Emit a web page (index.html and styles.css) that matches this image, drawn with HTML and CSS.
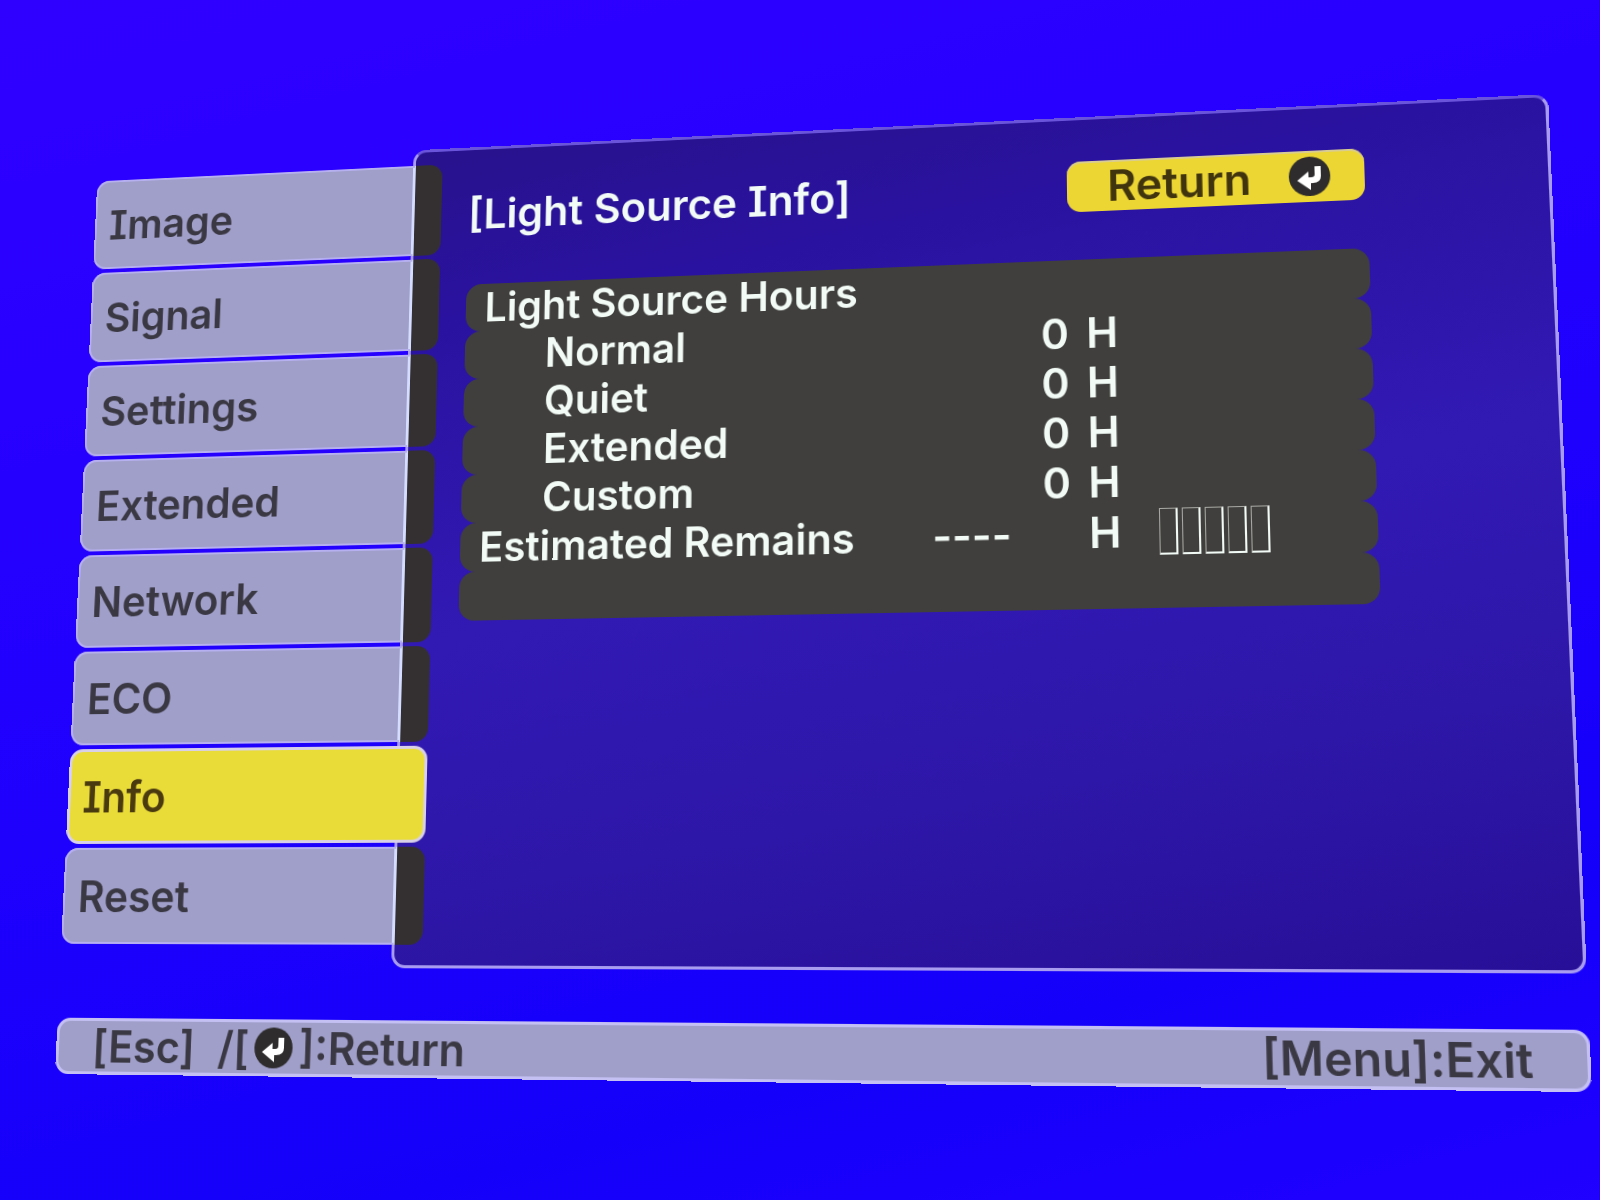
FILE: index.html
```html
<!DOCTYPE html>
<html lang="en">
<head>
	<meta charset="UTF-8">
	<meta name="viewport" content="width=device-width, initial-scale=1.0">
	<title>Light Source Info</title>
	<link rel="stylesheet" href="styles.css">
</head>
<body>
	<div id="screen">
		<div id="main">
			<ul id="menu">
				<li><a href="#image">Image</a></li>
				<li><a href="#signal">Signal</a></li>
				<li><a href="#settings">Settings</a></li>
				<li><a href="#extended">Extended</a></li>
				<li><a href="#network">Network</a></li>
				<li><a href="#eco">ECO</a></li>
				<li class="active"><a href="#info">Info</a></li>
				<li><a href="#reset">Reset</a></li>
			</ul>

			<div id="panel">
				<div class="panel-head">
					<h1>[Light Source Info]</h1>
					<button type="button" class="return-btn">
						Return
						<svg class="enter" viewBox="0 0 40 40" aria-hidden="true">
							<circle cx="20" cy="20" r="20" fill="#2e2c2c"/>
							<path d="M25 10h6v10q0 7-8 7h-2v7L8 24l11-9v6h3q3 0 3-3z" fill="#fff"/>
						</svg>
					</button>
				</div>
				<table class="hours">
					<colgroup>
						<col class="col-name">
						<col class="col-value">
						<col class="col-unit">
						<col>
					</colgroup>
					<tbody>
						<tr><th scope="row" colspan="4" class="wide">Light Source Hours</th></tr>
						<tr><th scope="row" class="sub">Normal</th><td class="num">0</td><td>H</td><td></td></tr>
						<tr><th scope="row" class="sub">Quiet</th><td class="num">0</td><td>H</td><td></td></tr>
						<tr><th scope="row" class="sub">Extended</th><td class="num">0</td><td>H</td><td></td></tr>
						<tr><th scope="row" class="sub">Custom</th><td class="num">0</td><td>H</td><td></td></tr>
						<tr>
							<th scope="row">Estimated Remains</th>
							<td>----</td>
							<td>H</td>
							<td><div class="meter"><i></i><i></i><i></i><i></i><i></i></div></td>
						</tr>
						<tr><td colspan="4" class="wide"></td></tr>
					</tbody>
				</table>
			</div>
		</div>

		<div id="guide">
			<div class="keys">
				<span>[Esc]</span>
				<span class="enter-key">/[<svg class="enter" viewBox="0 0 40 40" aria-hidden="true">
					<circle cx="20" cy="20" r="20" fill="#2e2c2c"/>
					<path d="M25 10h6v10q0 7-8 7h-2v7L8 24l11-9v6h3q3 0 3-3z" fill="#fff"/>
				</svg>]:Return</span>
			</div>
			<div>[Menu]:Exit</div>
		</div>
	</div>
</body>
</html>
```
FILE: styles.css
```css
* {
	padding: 0;
	margin: 0;
	box-sizing: border-box;
}
html {
	height: 100%;
	overflow: hidden;
	background: linear-gradient(165deg, #3000ff 0%, #2400ff 35%, #1400fa 80%, #2000ff 100%);
}
body {
	padding: 166px 2px 0 98px;
	font-family: Inter, "Liberation Sans", sans-serif;
	font-size: 44px;
	font-weight: 600;
	line-height: 50px;
	font-feature-settings: "cv08"; /* capital I with serifs */
	color: #3a3842;
}
ul {
	list-style: none;
}

/* the whole menu is projected at an angle */
#screen {
	transform-origin: 0 0;
	transform: matrix3d(
		0.88035, -0.04371, 0, -0.00005953,
		-0.04281, 0.90313, 0, -0.00005689,
		0, 0, 1, 0,
		0, 0, 0, 1);
}
#main {
	display: flex;
	margin-bottom: 51px;
}

#menu {
	position: relative;
	z-index: 1;
	width: 383px;
	margin-right: -32px;
	padding: 17px 0 23px;
	display: flex;
	flex-direction: column;
	gap: 4px;
}
#menu a {
	position: relative;
	display: flex;
	align-items: center;
	height: 97px;
	padding-left: 16px;
	border-radius: 14px;
	background: linear-gradient(to right, #a09fca 351px, #d4dcff 351px, #d4dcff 354px, #343031 354px);
	color: inherit;
	text-decoration: none;
}
/* light edge, only on the part left of the panel */
#menu a::before {
	content: "";
	position: absolute;
	top: 0;
	bottom: 0;
	left: 0;
	width: 351px;
	border: 2px solid #b6b0f0;
	border-right: 0;
	border-radius: 14px 0 0 14px;
}
#menu .active a {
	background: #e9dc38;
	border: 3px solid #d8d0e8;
	padding-left: 13px;
	color: #4a3a10;
}
#menu .active a::before {
	display: none;
}

#panel {
	flex: 1;
	padding: 43px 172px 0 58px;
	border: 3px solid #a89cf0;
	border-top-color: #6a54dc;
	border-radius: 14px;
	background: linear-gradient(170deg, #28128c 0%, #2a12a0 18%, #3119b4 50%, #2d17a8 75%, #280f98 100%);
	color: #f2fbf6;
}
.panel-head {
	display: flex;
	align-items: center;
	justify-content: space-between;
	padding-right: 2px;
	margin-bottom: 49px;
}
h1 {
	font-size: 44px;
	font-weight: 600;
}
.return-btn {
	display: flex;
	align-items: center;
	justify-content: space-between;
	width: 291px;
	height: 52px;
	padding: 0 33px 0 40px;
	border: 0;
	border-radius: 14px;
	background: #ecd634;
	box-shadow: inset 0 2px #d8cc90;
	font: inherit;
	color: #40340e;
}
.enter {
	width: 40px;
	height: 40px;
}

.hours {
	width: 100%;
	table-layout: fixed;
	border-spacing: 0;
	font-size: 42px;
}
.col-name {
	width: 483px;
}
.col-value {
	width: 137px;
}
.col-unit {
	width: 85px;
}
.hours th,
.hours td {
	height: 50px;
	background: #403f3d;
	font-weight: 600;
	text-align: left;
	white-space: nowrap;
}
.hours th {
	padding-left: 20px;
	border-radius: 16px 0 0 16px;
}
.hours .sub {
	padding-left: 85px;
}
.hours td:last-child {
	border-radius: 0 16px 16px 0;
}
.hours tr .wide:last-child {
	border-radius: 16px;
}
.hours .num {
	text-align: right;
}
.hours td:nth-child(3) {
	padding-left: 17px;
}
.meter {
	display: flex;
	gap: 4px;
}
.meter i {
	width: 18px;
	height: 46px;
	border: 1px solid #a8a8a4;
	border-right: 2px solid #f2fbf6;
	border-bottom: 2px solid #f2fbf6;
}

#guide {
	display: flex;
	align-items: center;
	justify-content: space-between;
	height: 56px;
	padding: 0 48px 0 36px;
	border: 3px solid #c4c0f4;
	border-radius: 14px;
	background: #a09fca;
}
.keys,
.enter-key {
	display: flex;
	align-items: center;
}
.keys {
	gap: 24px;
}
.enter-key .enter {
	margin: 0 6px;
}
```
